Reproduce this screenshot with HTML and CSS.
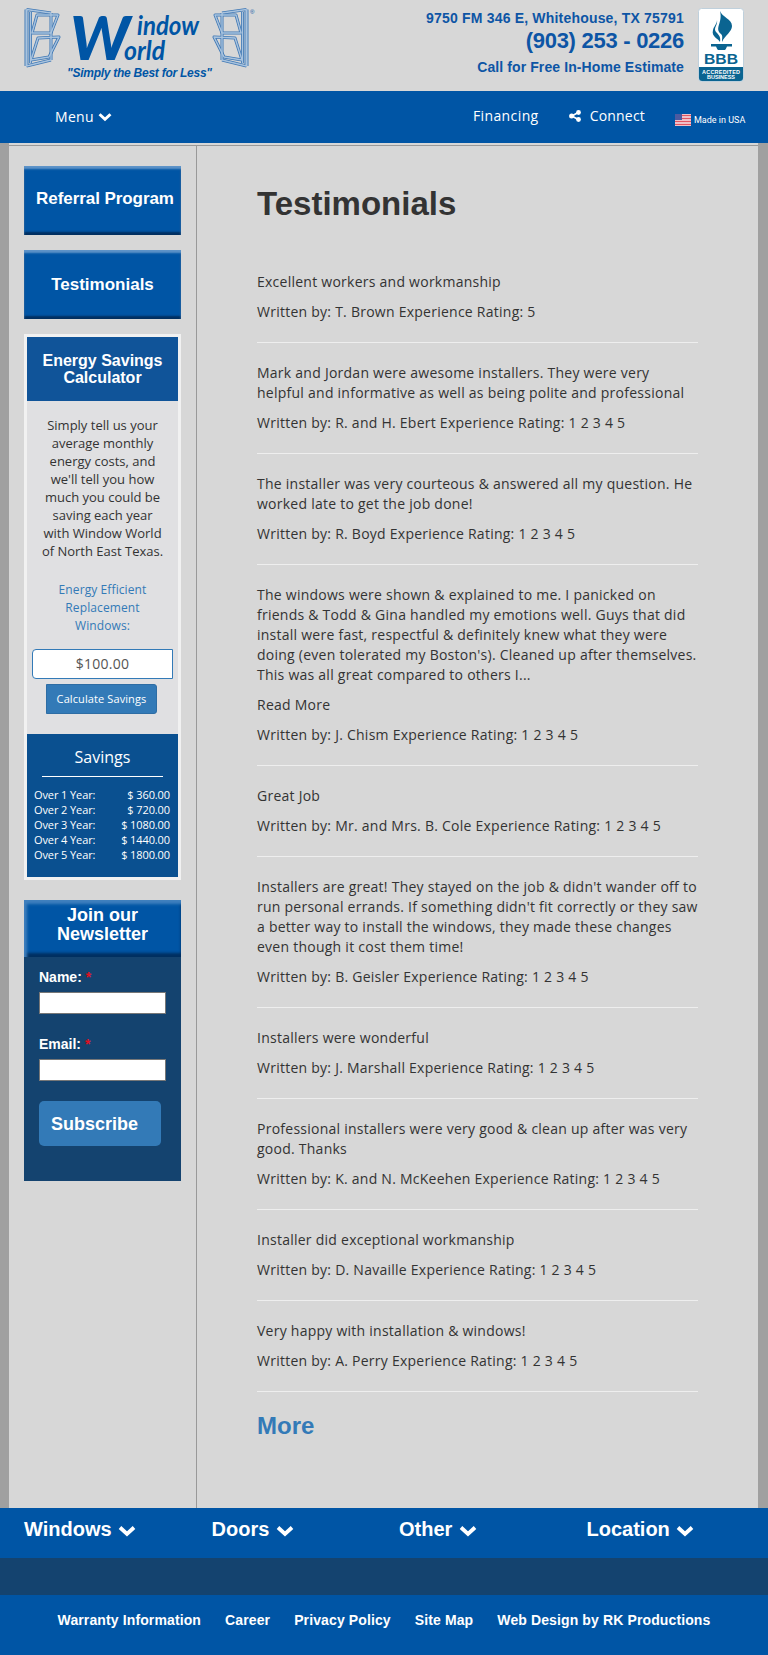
FILE: index.html
```html
<!DOCTYPE html>
<html lang="en">
<head>
<meta charset="utf-8">
<title>Testimonials | Window World</title>
<link rel="stylesheet" href="styles.css">
</head>
<body>
<svg class="defs" width="0" height="0">
  <symbol id="chev" viewBox="0 0 18 12"><path d="M2 2.5 9 9 16 2.5" fill="none" stroke="#fff" stroke-width="3.8"/></symbol>
  <symbol id="window" viewBox="0 0 37 60">
    <g id="frame" fill="none" stroke="#3f78b5" stroke-width="3" stroke-linejoin="round">
      <path d="M27 5V52M6.500 4V55"/>
      <path d="M2.500 1.500 27 5M2.500 58 27 52"/>
      <path d="M2.500 1.500V58" stroke-width="4"/>
      <path d="M13 7 34 7 27 25 8 25ZM14 30 35 29 25 49 7 52Z"/>
    </g>
    <g fill="none" stroke="#a9c3de" stroke-width="1.400" stroke-linejoin="round">
      <path d="M27 5V52M6.500 4V55"/>
      <path d="M2.500 1.500 27 5M2.500 58 27 52"/>
      <path d="M2.500 1.500V58" stroke-width="2.200"/>
      <path d="M13 7 34 7 27 25 8 25ZM14 30 35 29 25 49 7 52Z"/>
    </g>
  </symbol>
</svg>
<header class="header">
  <svg class="logo" viewBox="0 0 235 78" width="235" height="78">
    <use href="#window" x="0" y="4" width="37" height="60"/>
    <use href="#window" x="0" y="0" width="37" height="60" transform="translate(225 4) scale(-1 1)"/>
    <text class="script" x="46" y="56" font-size="60" textLength="60" lengthAdjust="spacingAndGlyphs">W</text>
    <text class="script small" x="113" y="31" font-size="26" textLength="62" lengthAdjust="spacingAndGlyphs">indow</text>
    <text class="script small" x="100" y="56" font-size="26" textLength="41" lengthAdjust="spacingAndGlyphs">orld</text>
    <text class="slogan" x="43" y="73" textLength="145">"Simply the Best for Less"</text>
    <text class="reg" x="226" y="10">®</text>
  </svg>
  <div class="contact">
    <div class="address">9750 FM 346 E, Whitehouse, TX 75791</div>
    <div class="phone">(903) 253 - 0226</div>
    <div class="call">Call for Free In-Home Estimate</div>
  </div>
  <svg class="bbb" viewBox="0 0 46 74" width="46" height="74">
    <rect x=".5" y=".5" width="45" height="73" rx="3" fill="#fff" stroke="#bfd0dc"/>
    <path d="M1 59H45V70Q45 73 42 73H4Q1 73 1 70Z" fill="#0a6491"/>
    <path d="M22 3C24 9 34 11 34 18C34 24 27 27 24 34C24 30 25 28 23 26C16 20 25 15 22 3Z" fill="#0a6491"/>
    <path d="M19 12C20 17 15 20 18 24C21 27 23 29 22 34C21 31 13 29 15 22C16 18 19 16 19 12Z" fill="#0a6491"/>
    <path d="M13 36H34V38.500H29Q28 41 27 42H20Q19 41 18 38.500H13Z" fill="#0a6491"/>
    <text class="bbb-name" x="6" y="56" textLength="34" lengthAdjust="spacingAndGlyphs">BBB</text>
    <text class="bbb-note" x="4" y="65.500" textLength="38">ACCREDITED</text>
    <text class="bbb-note" x="9" y="71" textLength="28">BUSINESS</text>
  </svg>
</header>
<nav class="nav">
  <a class="menu">Menu <svg width="14" height="10"><use href="#chev"/></svg></a>
  <a class="financing">Financing</a>
  <a class="connect"><svg width="12" height="12" viewBox="0 0 12 12"><path d="M10 2 3 6 10 10" fill="none" stroke="#fff" stroke-width="1.700"/><circle cx="2.600" cy="6" r="2.500" fill="#fff"/><circle cx="9.500" cy="2.500" r="2.400" fill="#fff"/><circle cx="9.500" cy="9.500" r="2.400" fill="#fff"/></svg>Connect</a>
  <a class="usa"><svg width="16" height="12" viewBox="0 0 16 12"><rect width="16" height="12" fill="#f4e4ea"/><path d="M0 1.500H16M0 4.500H16M0 7.500H16M0 10.500H16" stroke="#e05563" stroke-width="1.500"/><rect width="7" height="6" fill="#4c5aa0"/></svg><span>Made in USA</span></a>
</nav>
<main class="page">
  <aside class="sidebar">
    <a class="button referral">Referral Program</a>
    <a class="button">Testimonials</a>
    <section class="calc">
      <h2>Energy Savings<br>Calculator</h2>
      <p class="intro">Simply tell us your<br>average monthly<br>energy costs, and<br>we'll tell you how<br>much you could be<br>saving each year<br>with Window World<br>of North East Texas.</p>
      <p class="label">Energy Efficient<br>Replacement<br>Windows:</p>
      <div class="amount">$100.00</div>
      <div class="calculate">Calculate Savings</div>
      <div class="savings">
        <h3>Savings</h3>
        <div class="row"><span>Over 1 Year:</span><span>$ 360.00</span></div>
        <div class="row"><span>Over 2 Year:</span><span>$ 720.00</span></div>
        <div class="row"><span>Over 3 Year:</span><span>$ 1080.00</span></div>
        <div class="row"><span>Over 4 Year:</span><span>$ 1440.00</span></div>
        <div class="row"><span>Over 5 Year:</span><span>$ 1800.00</span></div>
      </div>
    </section>
    <section class="join">
      <h2>Join our<br>Newsletter</h2>
      <div class="field">Name: <i>*</i></div>
      <div class="input"></div>
      <div class="field">Email: <i>*</i></div>
      <div class="input"></div>
      <div class="subscribe">Subscribe</div>
    </section>
  </aside>
  <article class="content">
    <h1>Testimonials</h1>
    <div class="item"><p>Excellent workers and workmanship</p><p>Written by: T. Brown Experience Rating: 5</p></div>
    <div class="item"><p>Mark and Jordan were awesome installers. They were very<br>helpful and informative as well as being polite and professional</p><p>Written by: R. and H. Ebert Experience Rating: 1 2 3 4 5</p></div>
    <div class="item"><p>The installer was very courteous &amp; answered all my question. He<br>worked late to get the job done!</p><p>Written by: R. Boyd Experience Rating: 1 2 3 4 5</p></div>
    <div class="item"><p>The windows were shown &amp; explained to me. I panicked on<br>friends &amp; Todd &amp; Gina handled my emotions well. Guys that did<br>install were fast, respectful &amp; definitely knew what they were<br>doing (even tolerated my Boston's). Cleaned up after themselves.<br>This was all great compared to others I...</p><p>Read More</p><p>Written by: J. Chism Experience Rating: 1 2 3 4 5</p></div>
    <div class="item"><p>Great Job</p><p>Written by: Mr. and Mrs. B. Cole Experience Rating: 1 2 3 4 5</p></div>
    <div class="item"><p>Installers are great! They stayed on the job &amp; didn't wander off to<br>run personal errands. If something didn't fit correctly or they saw<br>a better way to install the windows, they made these changes<br>even though it cost them time!</p><p>Written by: B. Geisler Experience Rating: 1 2 3 4 5</p></div>
    <div class="item"><p>Installers were wonderful</p><p>Written by: J. Marshall Experience Rating: 1 2 3 4 5</p></div>
    <div class="item"><p>Professional installers were very good &amp; clean up after was very<br>good. Thanks</p><p>Written by: K. and N. McKeehen Experience Rating: 1 2 3 4 5</p></div>
    <div class="item"><p>Installer did exceptional workmanship</p><p>Written by: D. Navaille Experience Rating: 1 2 3 4 5</p></div>
    <div class="item"><p>Very happy with installation &amp; windows!</p><p>Written by: A. Perry Experience Rating: 1 2 3 4 5</p></div>
    <a class="more">More</a>
  </article>
</main>
<footer>
  <div class="columns">
    <a>Windows <svg width="18" height="12"><use href="#chev"/></svg></a>
    <a>Doors <svg width="18" height="12"><use href="#chev"/></svg></a>
    <a>Other <svg width="18" height="12"><use href="#chev"/></svg></a>
    <a>Location <svg width="18" height="12"><use href="#chev"/></svg></a>
  </div>
  <div class="band"></div>
  <div class="links"><a>Warranty Information</a><a>Career</a><a>Privacy Policy</a><a>Site Map</a><a>Web Design by RK Productions</a></div>
</footer>
</body>
</html>
```
FILE: styles.css
```css
* { box-sizing: border-box; }
body { margin: 0; width: 768px; background: #a0a0a0; color: #333; font: 14px/20px "Open Sans", sans-serif; }
h1, h2, h3, p { margin: 0; }
h1, h2, .contact, .button, .field, .subscribe, .more, footer { font-family: "Liberation Sans", Arial, sans-serif; font-weight: bold; }
svg { flex: none; }
.defs { position: absolute; }

.header { height: 91px; background: #d7d7d7; display: flex; padding-left: 24px; color: #0d55a5; }
.logo { margin-top: 4px; }
.script { font-family: Lato, sans-serif; font-style: italic; font-weight: 900; fill: #0055a5; }
.small { font-weight: 700; }
.slogan { font: italic bold 12px "Liberation Sans", sans-serif; fill: #0055a5; }
.reg { font: 6px "Liberation Sans", sans-serif; fill: #0055a5; }
.contact { margin-left: auto; text-align: right; white-space: nowrap; font-size: 14px; padding-top: 8px; }
.address { letter-spacing: .19px; }
.phone { font-size: 22px; line-height: 25px; letter-spacing: -.27px; }
.call { margin-top: 4px; letter-spacing: .1px; }
.bbb { margin: 8px 24px 0 14px; }
.bbb-name { font: bold 15px "Liberation Sans", sans-serif; fill: #0a6491; }
.bbb-note { font: bold 5.500px "Liberation Sans", sans-serif; fill: #fff; }

.nav { height: 52px; background: #0055a5; color: #fff; display: flex; padding: 15px 24px 0 55px; white-space: nowrap; }
.menu { padding-top: 1px; letter-spacing: .3px; }
.financing { margin-left: auto; letter-spacing: .4px; }
.connect { margin-left: 30px; letter-spacing: .2px; }
.connect svg { margin-right: 9px; vertical-align: -1px; }
.usa { display: flex; gap: 3px; align-items: center; margin-left: 30px; width: 69px; height: 26px; font: 9px/20px Roboto, sans-serif; }
.usa svg { margin-bottom: -2px; }
.usa span { margin-bottom: -2px; }

.page { margin: 0 10px 0 9px; height: 1365px; background: #d7d7d7; display: flex; border-top: 2px solid #d7d7d7; box-shadow: inset 0 1px #999; }
.sidebar { width: 188px; border-right: 1px solid #999; padding: 21px 15px 0; }
.button { display: flex; align-items: center; justify-content: center; height: 69px; margin-bottom: 15px; background: #0055a5; color: #fff; font-size: 17px; box-shadow: inset 0 3px 2px #5d93c8, inset 0 -3px 2px #002f60; white-space: nowrap; }
.referral { padding: 0 0 3px 5px; letter-spacing: -.07px; }
.calc { border: 3px solid #f1f1f1; height: 546px; background: #e0e0e2; text-align: center; font-size: 13px; line-height: 18px; white-space: nowrap; }
.calc h2 { height: 64px; background: #105499; color: #fff; font-size: 16px; line-height: 17px; padding-top: 15px; }
.intro { padding-top: 15px; }
.label { margin-top: 21px; color: #337ab7; font-size: 12px; letter-spacing: .1px; }
.amount { width: 141px; height: 30px; margin: 14px 0 0 5px; border: 1px solid #337ab7; border-radius: 4px 0 0 4px; background: #fff; color: #555; font-size: 14px; line-height: 28px; letter-spacing: .25px; }
.calculate { width: 111px; height: 30px; margin: 5px 0 0 19px; border-radius: 0 3px 3px 0; border: 1px solid #2e6da4; background: #337ab7; color: #fff; font-size: 11px; line-height: 28px; letter-spacing: .1px; }
.savings { margin-top: 20px; height: 143px; padding: 13px 8px 0 7px; background: #0a5090; color: #fff; font-size: 11px; line-height: 15px; }
h3 { font-size: 16px; font-weight: normal; line-height: 20px; margin: 0 7px 10px 8px; padding-bottom: 9px; border-bottom: 1px solid #fff; }
.row { display: flex; justify-content: space-between; letter-spacing: -.1px; }
.join { margin-top: 20px; height: 281px; background: #14436f; color: #fff; }
.join h2 { height: 57px; margin-bottom: 10px; padding-top: 6px; background: #0055a5; font-size: 18px; line-height: 19px; text-align: center; box-shadow: inset 3px 4px 3px #3f80be, inset 0 -4px 3px #002f60; }
.field { margin-left: 15px; font-size: 14px; height: 25px; }
.field i { color: #e01020; font-style: normal; }
.input { width: 127px; height: 22px; margin: 0 0 20px 15px; border: 1px solid #777; background: #fff; }
.subscribe { width: 122px; height: 45px; margin-left: 15px; padding-left: 12px; border-radius: 5px; background: #337ab7; font-size: 18px; line-height: 46px; }

.content { padding: 39px 0 0 60px; width: 501px; white-space: nowrap; }
h1 { font-size: 33px; line-height: 40px; margin-bottom: 48px; }
.item { border-bottom: 1px solid #eee; padding-bottom: 20px; margin-bottom: 20px; letter-spacing: .25px; }
.item p + p { margin-top: 10px; }
.more { display: block; color: #337ab7; font-size: 24px; line-height: 28px; }

footer { background: #0055a5; color: #fff; }
.columns { height: 50px; padding: 10px 0 0 24px; display: grid; grid-template-columns: repeat(4, 187.500px); font-size: 20px; line-height: 22px; white-space: nowrap; }
.columns svg { margin-left: 1px; vertical-align: -1px; }
.band { height: 37px; background: #14436f; }
.links { height: 60px; padding-top: 15px; display: flex; justify-content: center; gap: 24px; font-size: 14px; letter-spacing: .12px; }
```
